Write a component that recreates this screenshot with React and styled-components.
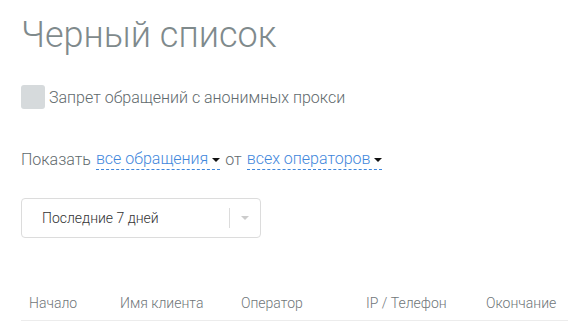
import React from "react";
import styled, { createGlobalStyle } from "styled-components";

const GlobalStyle = createGlobalStyle`
  body {
    margin: 0;
    background: #fff;
    font-family: Roboto, "Liberation Sans", sans-serif;
    font-weight: 300;
  }
`;

const Page = styled.div`
  padding: 12px 0 0 21px;
  width: 568px;
  box-sizing: border-box;
  overflow: hidden;
`;

const Title = styled.h1`
  margin: 0;
  font-size: 36px;
  font-weight: 300;
  line-height: 46px;
  color: #7f8a8c;
`;

const CheckRow = styled.label`
  display: flex;
  align-items: center;
  gap: 4px;
  margin-top: 27px;
  font-size: 16px;
  color: #5f6a6d;
`;

const Box = styled.span`
  width: 24px;
  height: 24px;
  border-radius: 3px;
  background: #d6dadc;
`;

const Filter = styled.div`
  margin-top: 40px;
  font-size: 16px;
  color: #5f6a6d;
  display: flex;
  align-items: center;
  gap: 5px;
`;

const Dropdown = styled.span`
  color: #3f87dc;
  border-bottom: 1px dashed #3f87dc;
  line-height: 20px;
  display: inline-flex;
  align-items: center;
  gap: 4px;
`;

const Caret = styled.span`
  width: 0;
  height: 0;
  border-left: 4px solid transparent;
  border-right: 4px solid transparent;
  border-top: 4px solid #111;
  margin-top: 2px;
`;

const Select = styled.div`
  margin-top: 28px;
  width: 240px;
  height: 40px;
  box-sizing: border-box;
  border: 1px solid #dcdcdc;
  border-radius: 4px;
  display: flex;
  align-items: center;
  padding-left: 20px;
  font-size: 14px;
  color: #333;
`;

const SelectValue = styled.span`
  flex: 1;
`;

const Separator = styled.span`
  width: 1px;
  height: 20px;
  background: #dcdcdc;
`;

const SelectArrow = styled.span`
  width: 30px;
  display: flex;
  justify-content: center;
  &::after {
    content: "";
    border-left: 4px solid transparent;
    border-right: 4px solid transparent;
    border-top: 4px solid #ccc;
  }
`;

const Table = styled.div`
  margin-top: 48px;
  display: flex;
  border-bottom: 1px solid #ececec;
  height: 34px;
  align-items: center;
  font-size: 14px;
  color: #6f7679;
`;

const Th = styled.div`
  width: ${(p) => p.w}px;
  flex: none;
  padding-left: 8px;
  box-sizing: border-box;
  white-space: nowrap;
`;

const columns = [
  ["Начало", 91],
  ["Имя клиента", 121],
  ["Оператор", 125],
  ["IP / Телефон", 120],
  ["Окончание", 100],
];

export default function App() {
  return (
    <Page>
      <GlobalStyle />
      <Title>Черный список</Title>
      <CheckRow>
        <Box />
        Запрет обращений с анонимных прокси
      </CheckRow>
      <Filter>
        Показать
        <Dropdown>
          все обращения <Caret />
        </Dropdown>
        от
        <Dropdown>
          всех операторов <Caret />
        </Dropdown>
      </Filter>
      <Select>
        <SelectValue>Последние 7 дней</SelectValue>
        <Separator />
        <SelectArrow />
      </Select>
      <Table>
        {columns.map(([t, w]) => (
          <Th key={t} w={w}>
            {t}
          </Th>
        ))}
      </Table>
    </Page>
  );
}
